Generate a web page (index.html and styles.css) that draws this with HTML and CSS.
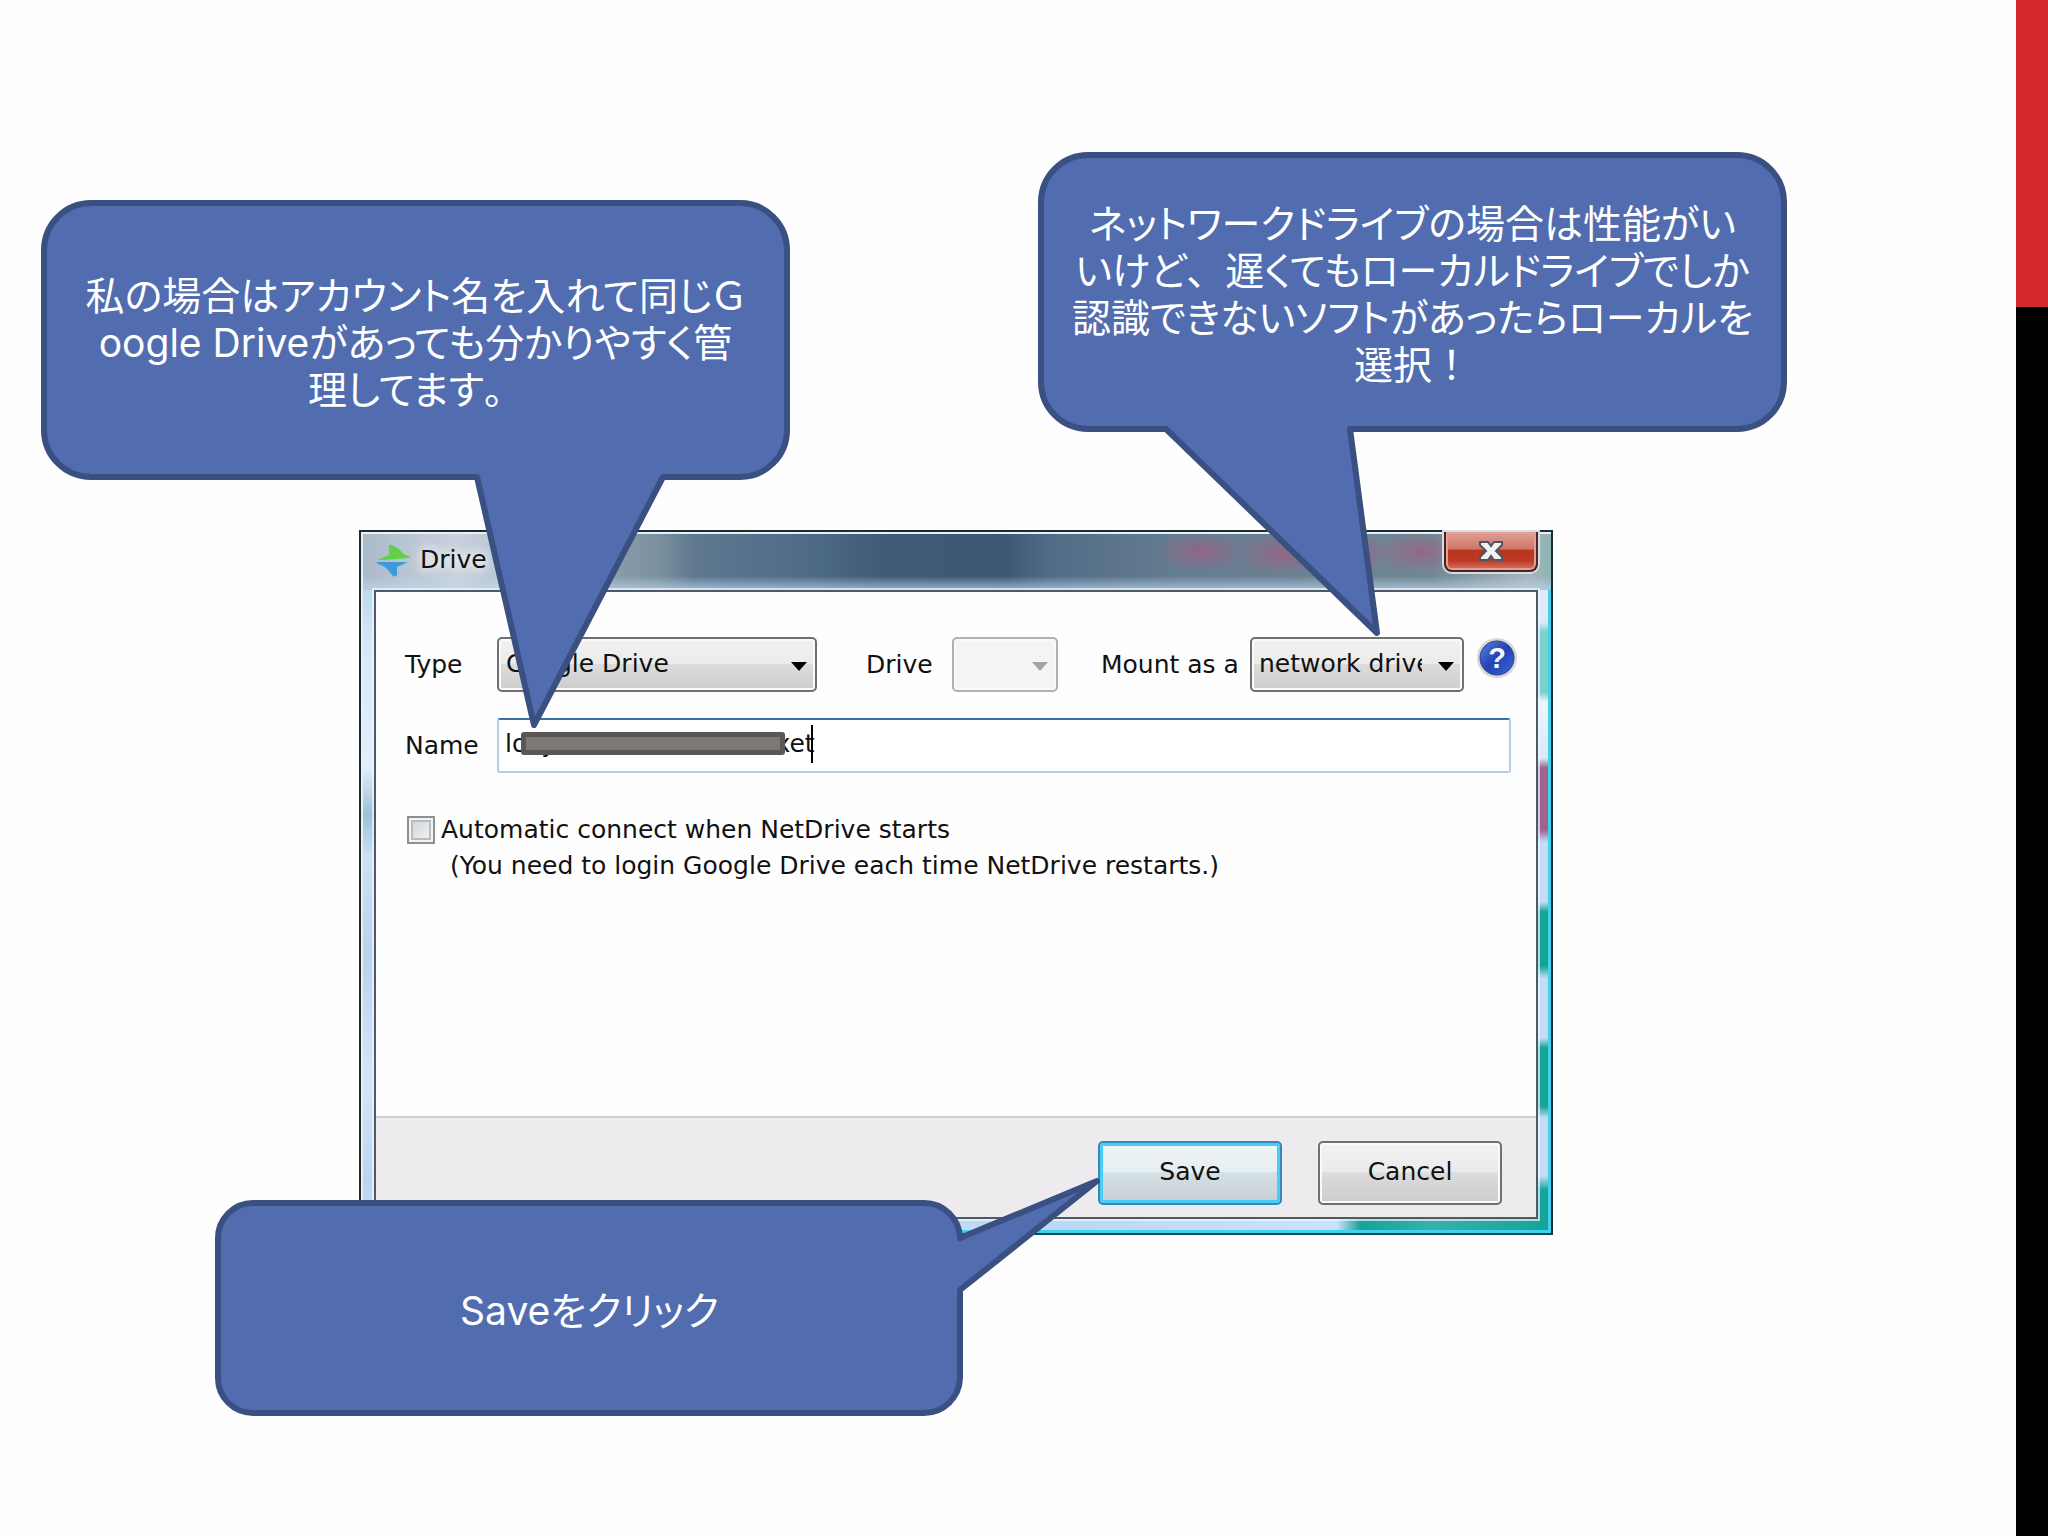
FILE: index.html
```
<!DOCTYPE html>
<html lang="ja">
<head>
    <meta charset="utf-8">
    <title>NetDrive - Google Drive</title>
    <link rel="stylesheet" href="styles.css">
</head>
<body>
    <div class="slide">
        <main class="stage">
            <form class="dialog">
                <header class="titlebar">
                    <svg class="logo" width="36" height="34" viewBox="0 0 36 34">
                        <path d="M1 16 L13 11 V2 Q13 0 16 1 L24 6 Q27 11 35 13 Q30 15 1 16 Z" fill="#62d043"/>
                        <path d="M0 18 H32 L21 23 V31 Q19 34 16 31 L12 26 Q9 22 2 20 Z" fill="#3a9bdc"/>
                    </svg>
                    <h1 class="title">Drive</h1>
                    <button class="close" type="button" aria-label="Close">
                        <svg width="26" height="22" viewBox="0 0 26 22">
                            <path d="M2 2 H10 L13 6 L16 2 H24 V5 L18 11 L24 17 V20 H16 L13 16 L10 20 H2 V17 L8 11 L2 5 Z" fill="#f2f2f2" stroke="#4c5665" stroke-width="2"/>
                        </svg>
                    </button>
                </header>
                <div class="client">
                    <div class="fields">
                        <div class="row">
                            <label class="label-first" for="type">Type</label>
                            <span class="dropdown dropdown-type">
                                <select id="type">
                                    <option>Google Drive</option>
                                </select>
                            </span>
                            <label class="label-drive" for="drive">Drive</label>
                            <span class="dropdown dropdown-drive disabled">
                                <select id="drive" disabled>
                                    <option></option>
                                </select>
                            </span>
                            <label class="label-mount" for="mount">Mount as a</label>
                            <span class="dropdown dropdown-mount">
                                <select id="mount">
                                    <option>network drive</option>
                                </select>
                            </span>
                            <button class="help" type="button" aria-label="Help">
                                <svg width="42" height="42" viewBox="0 0 42 42">
                                    <defs>
                                        <linearGradient id="ball" x1="0" y1="0" x2="1" y2="1">
                                            <stop offset="0" stop-color="#5b83dd"/>
                                            <stop offset="0.5" stop-color="#2342b4"/>
                                            <stop offset="1" stop-color="#3b68d8"/>
                                        </linearGradient>
                                    </defs>
                                    <circle cx="21" cy="21" r="20" fill="#d9d7d4"/>
                                    <circle cx="21" cy="21" r="17" fill="url(#ball)" stroke="#2a3f96" stroke-width="1"/>
                                    <text x="21" y="31" text-anchor="middle">?</text>
                                </svg>
                            </button>
                        </div>
                        <div class="row">
                            <label class="label-first" for="name">Name</label>
                            <div class="name-box">
                                <input id="name" type="text" value="loxyxhxxxxhxhxxxdbixet">
                                <span class="redacted"></span>
                                <span class="caret"></span>
                            </div>
                        </div>
                        <div class="row auto">
                            <input id="auto" type="checkbox">
                            <label for="auto">Automatic connect when NetDrive starts<br>
                                <span class="note">(You need to login Google Drive each time NetDrive restarts.)</span>
                            </label>
                        </div>
                    </div>
                    <footer class="buttons">
                        <button class="btn btn-default" type="button">Save</button>
                        <button class="btn" type="button">Cancel</button>
                    </footer>
                </div>
            </form>

            <div class="callout callout-name">
                <svg class="bubble" width="749" height="280" viewBox="0 0 749 280">
                    <path d="M50 3 H699 A47 47 0 0 1 746 50 V230 A47 47 0 0 1 699 277 H622 L493 525 L436 277 H50 A47 47 0 0 1 3 230 V50 A47 47 0 0 1 50 3 Z"/>
                </svg>
                <p>私の場合はアカウント名を入れて同じＧ<br>oogle Driveがあっても分かりやすく管<br>理してます<span class="full">。</span></p>
            </div>

            <div class="callout callout-mount">
                <svg class="bubble" width="749" height="280" viewBox="0 0 749 280">
                    <path d="M50 3 H699 A47 47 0 0 1 746 50 V230 A47 47 0 0 1 699 277 H312 L339 481 L128 277 H50 A47 47 0 0 1 3 230 V50 A47 47 0 0 1 50 3 Z"/>
                </svg>
                <p>ネットワークドライブの場合は性能がい<br>いけど<span class="full">、</span>遅くてもローカルドライブでしか<br>認識できないソフトがあったらローカルを<br>選択<span class="full">！</span></p>
            </div>

            <div class="callout callout-save">
                <svg class="bubble" width="749" height="216" viewBox="0 0 749 216">
                    <path d="M38 3 H709 A36 36 0 0 1 745 38 L882 -19 L745 90 V178 A36 36 0 0 1 709 213 H38 A35 35 0 0 1 3 178 V38 A35 35 0 0 1 38 3 Z"/>
                </svg>
                <p>Saveをクリック</p>
            </div>
        </main>
        <aside class="stripe"></aside>
    </div>
</body>
</html>
```
FILE: styles.css
```
* {
    box-sizing: border-box;
}

body {
    margin: 0;
    background: #fefefe;
    color: #111;
    font-family: "DejaVu Sans", Verdana, sans-serif;
    font-size: 25px;
}

.slide {
    display: flex;
    min-height: 100vh;
}

.stage {
    position: relative;
    flex: 1;
    padding: 530px 463px 0 359px;
}

/* red and black bar on the right edge */
.stripe {
    flex: none;
    width: 32px;
    background: linear-gradient(#d4282f 20%, #000 20%);
}

/* Aero window frame */
.dialog {
    padding: 0 13px 14px;
    border: 2px solid #1c2c34;
    border-bottom-color: #0c4a52;
    background:
        linear-gradient(#3fd3f0, #3fd3f0) right 0 top 58px / 3px 100% no-repeat,
        linear-gradient(#3fd3f0, #3fd3f0) left 0 bottom 0 / 100% 3px no-repeat,
        linear-gradient(#e8f0f4, #e8f0f4) left 0 top 0 / 100% 2px no-repeat,
        linear-gradient(#e8f0f4, #e8f0f4) left 0 top 0 / 2px 100% no-repeat,
        radial-gradient(closest-side, rgba(165, 90, 130, 0.7), transparent) right 305px top 0 / 90px 40px no-repeat,
        radial-gradient(closest-side, rgba(165, 90, 130, 0.7), transparent) right 225px top 0 / 90px 44px no-repeat,
        radial-gradient(closest-side, rgba(165, 90, 130, 0.7), transparent) right 160px top 0 / 70px 40px no-repeat,
        radial-gradient(closest-side, rgba(165, 90, 130, 0.7), transparent) right 86px top 0 / 90px 40px no-repeat,
        linear-gradient(transparent 44px, rgba(190, 215, 240, 0.6) 56px) left 0 top 0 / 100% 58px no-repeat,
        linear-gradient(90deg, #aab9c9 0, #c9d2dc 8%, #b3c0cd 14%, #8799a8 22%, #7b919f 25%, #5f7890 28%, #4d6a86 38%, #3f5b76 44%, #3d5873 54%, #526c87 58%, #647c90 68%, #718795 90%, #a5b5bb 98%, #8fb4b4 100%) left 0 top 0 / 100% 58px no-repeat,
        linear-gradient(#bcd9ee 0, #d5e8fb 8%, #e3effb 25%, #9fc0d8 32%, #c9e2f6 38%, #b9d3ec 52%, #d0e6fc 70%, #bcd5ef 84%, #d2e7fc 100%) left 0 top 58px / 13px 100% no-repeat,
        linear-gradient(#dfeaf6 0, #dfeaf6 32px, #7ccfcb 42px, #7ccfcb 102px, #eef5fc 112px, #d6eaf6 168px, #a0628f 178px, #a0628f 240px, #c5dcf7 252px, #c5dcf7 312px, #16a394 322px, #16a394 376px, #c5dcf7 388px, #c5dcf7 448px, #16a394 458px, #16a394 516px, #c5dcf7 528px, #c5dcf7 586px, #16a39a 600px) right 0 top 58px / 13px 100% no-repeat,
        linear-gradient(90deg, #d2e7fc 0, #bcd8f5 60%, #cbe2fb 82%, #16a39a 84%, #37b0ac 90%, #16a39a 100%) left 0 bottom 0 / 100% 14px no-repeat;
}

.titlebar {
    display: flex;
    align-items: center;
    height: 58px;
}

.logo {
    margin-left: 2px;
}

.title {
    flex: 1;
    margin: 0 0 4px 8px;
    font-size: 25px;
    font-weight: normal;
    text-shadow: 0 0 10px #fff, 0 0 14px #fff;
}

.close {
    display: flex;
    align-items: center;
    justify-content: center;
    align-self: flex-start;
    width: 94px;
    height: 40px;
    padding: 0;
    border: 2px solid #4a2426;
    border-top: none;
    border-radius: 0 0 8px 8px;
    box-shadow: 0 0 0 2px #d5dde2, inset 0 0 0 2px #e0a096;
    background: linear-gradient(#e0a096 0, #cf7566 45%, #b63420 48%, #bc3a26 75%, #dc7561 100%);
}

.client {
    border: 2px solid #4f5a68;
    box-shadow: 0 0 0 2px rgba(240, 248, 255, 0.7);
    background: #fefefe;
}

.fields {
    min-height: 524px;
    padding: 45px 18px 0 29px;
}

.row {
    display: flex;
    align-items: center;
    margin-bottom: 26px;
}

.label-first {
    width: 92px;
}

.label-drive {
    width: 86px;
    margin-left: 49px;
}

.label-mount {
    width: 149px;
    margin-left: 43px;
    white-space: nowrap;
}

.dropdown {
    position: relative;
}

.dropdown::after {
    content: "";
    position: absolute;
    top: 25px;
    right: 10px;
    border: 8px solid transparent;
    border-top: 9px solid #000;
    border-bottom: none;
    pointer-events: none;
}

.dropdown select {
    appearance: none;
    width: 100%;
    height: 55px;
    padding: 0 40px 3px 7px;
    border: 2px solid #707070;
    border-radius: 5px;
    box-shadow: inset 0 0 0 2px #fafafa;
    background: linear-gradient(#f2f2f2 0, #ebebeb 48%, #dcdcdc 50%, #cdcdcf 100%);
    color: #111;
    font: inherit;
}

.dropdown-type {
    width: 320px;
}

.dropdown-drive {
    width: 106px;
}

.dropdown-mount {
    width: 214px;
}

.disabled select {
    border-color: #b0b0b0;
    background: #f4f4f4;
    opacity: 1;
}

.disabled::after {
    border-top-color: #a3a3a3;
}

.help {
    align-self: flex-start;
    height: 42px;
    margin-left: 12px;
    padding: 0;
    border: none;
    background: none;
}

.help text {
    fill: #f4f6fc;
    font-family: "Liberation Sans", sans-serif;
    font-size: 29px;
    font-weight: bold;
}

.name-box {
    position: relative;
    flex: 1;
    margin-right: 7px;
}

.name-box input {
    display: block;
    width: 100%;
    height: 55px;
    padding: 0 8px 4px 6px;
    border: 2px solid #b5cfe7;
    border-top-color: #3d6fa5;
    border-radius: 3px;
    background: #fff;
    color: #111;
    font: inherit;
}

.redacted {
    position: absolute;
    top: 14px;
    left: 24px;
    width: 264px;
    height: 23px;
    border: 5px solid #5b5755;
    border-radius: 3px;
    background: #7b7876;
}

.caret {
    position: absolute;
    top: 7px;
    left: 314px;
    width: 2px;
    height: 38px;
    background: #000;
}

.auto {
    align-items: flex-start;
    margin-top: 39px;
    line-height: 36px;
}

.auto input {
    appearance: none;
    width: 28px;
    height: 28px;
    margin: 4px 6px 0 2px;
    border: 2px solid #8e8f8f;
    box-shadow: inset 0 0 0 2px #f4f4f4, inset 0 0 0 4px #b8bcc0;
    background: linear-gradient(135deg, #cbcfd5, #f6f6f6);
}

.note {
    margin-left: 9px;
}

.buttons {
    display: flex;
    justify-content: flex-end;
    gap: 36px;
    padding: 23px 34px 12px;
    border-top: 2px solid #d0ced0;
    background: #edebed;
}

.btn {
    width: 184px;
    height: 64px;
    padding: 0 0 4px;
    border: 2px solid #707070;
    border-radius: 5px;
    box-shadow: inset 0 0 0 2px #fafafa;
    background: linear-gradient(#f2f2f2 0, #ebebeb 48%, #dcdcdc 50%, #cdcbcd 100%);
    color: #111;
    font: inherit;
}

.btn-default {
    border-color: #3a86b4;
    box-shadow: inset 0 0 0 3px #48cdf4;
    background: linear-gradient(#f0f4f5 0, #e6eef0 48%, #d3e0e4 50%, #c8cfd5 100%);
}

/* speech bubbles lying over the window */
.callout {
    position: absolute;
    display: flex;
    align-items: center;
    justify-content: center;
    width: 749px;
    height: 280px;
    padding-top: 4px;
    color: #fff;
    font-family: Inter, "Noto Sans CJK JP", sans-serif;
    font-feature-settings: "palt";
    font-size: 39px;
    line-height: 47px;
    text-align: center;
    white-space: nowrap;
}

.callout p {
    position: relative;
    margin: 0;
}

/* punctuation that keeps its full width */
.full {
    font-feature-settings: normal;
}

.bubble {
    position: absolute;
    top: 0;
    left: 0;
    overflow: visible;
    fill: #516db0;
    stroke: #3a4f82;
    stroke-width: 6;
    stroke-linejoin: round;
}

.callout-name {
    top: 200px;
    left: 41px;
}

.callout-mount {
    top: 152px;
    left: 1038px;
}

.callout-save {
    top: 1200px;
    left: 215px;
    height: 216px;
}
```
